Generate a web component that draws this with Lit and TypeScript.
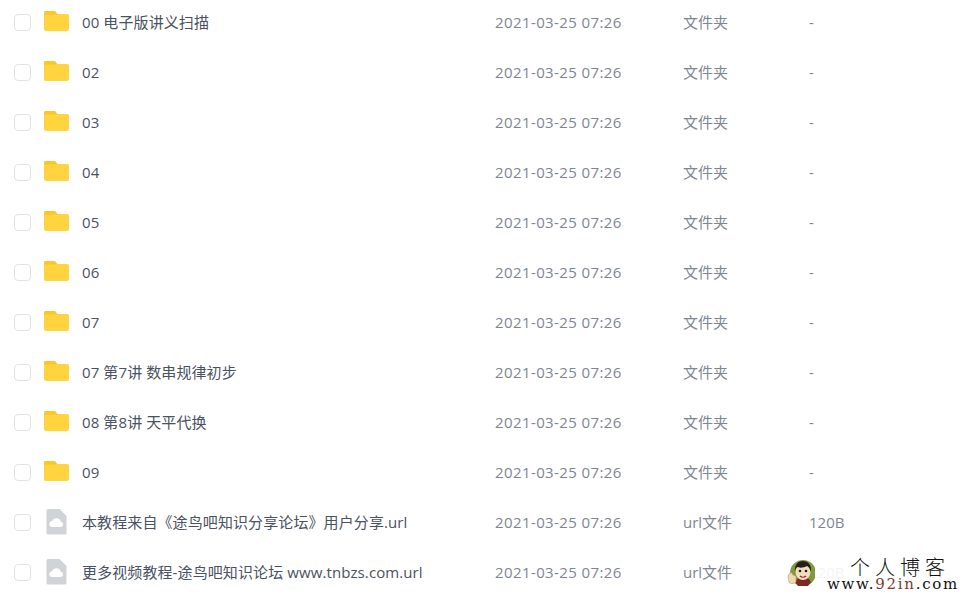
import { LitElement, html, css, svg } from "lit";
import { customElement } from "lit/decorators.js";

interface Row { name: string; kind: "folder" | "file"; type: string; size: string; }

const folder = (name: string): Row => ({ name, kind: "folder", type: "文件夹", size: "-" });
const rows: Row[] = [
  folder("00 电子版讲义扫描"), folder("02"), folder("03"), folder("04"), folder("05"),
  folder("06"), folder("07"), folder("07 第7讲 数串规律初步"), folder("08 第8讲 天平代换"), folder("09"),
  { name: "本教程来自《途鸟吧知识分享论坛》用户分享.url", kind: "file", type: "url文件", size: "120B" },
  { name: "更多视频教程-途鸟吧知识论坛 www.tnbzs.com.url", kind: "file", type: "url文件", size: "120B" },
];

const folderIcon = svg`<svg class="icon folder" width="25" height="20" viewBox="0 0 25 20">
  <path d="M0 2a2 2 0 0 1 2-2h8a2 2 0 0 1 1.500.7L13.500 3H23a2 2 0 0 1 2 2v13a2 2 0 0 1-2 2H2a2 2 0 0 1-2-2z" fill="#ffd43f"/>
  <path d="M0 2a2 2 0 0 1 2-2h8a2 2 0 0 1 1.500.7L13.500 3.400H0z" fill="#fcc62b"/>
</svg>`;

const fileIcon = svg`<svg class="icon" width="26" height="26" viewBox="0 0 26 26">
  <path d="M2.500 1.500A1.500 1.500 0 0 1 4 0h11.500l7 7v17a1.500 1.500 0 0 1-1.500 1.500H4A1.500 1.500 0 0 1 2.500 24z" fill="#d0d3d8"/>
  <path d="M7.500 18a3 3 0 0 1 .6-5.900 4.600 4.600 0 0 1 8.700.6A2.700 2.700 0 0 1 17 18z" fill="#fff"/>
</svg>`;

@customElement("app-root")
export class AppRoot extends LitElement {
  static styles = css`
    :host { display: block; position: relative; width: 978px; height: 594px; overflow: hidden; background: #fff;
      font-family: "Open Sans", "Noto Sans CJK SC", sans-serif; font-size: 15px; color: #555d6b; }
    .list { margin-top: -3px; }
    .row { display: flex; align-items: center; height: 50px; }
    .check { box-sizing: border-box; width: 17px; height: 17px; margin-left: 14px; border: 1.500px solid #e2e2e4; border-radius: 4px; flex: none; }
    .iconbox { width: 26px; margin-left: 13px; margin-right: 12px; display: flex; justify-content: flex-start; flex: none; }
    .icon { display: block; }
    .folder { margin-top: -2px; }
    .name, .date, .type, .size { line-height: 20px; padding-bottom: 1px; }
    .name { width: 413px; flex: none; white-space: nowrap; color: #4a5261; letter-spacing: 0.1px; }
    .date { width: 188px; flex: none; color: #7f8693; white-space: nowrap; letter-spacing: 0.4px; }
    .type { width: 126px; flex: none; color: #7f8693; white-space: nowrap; }
    .size { color: #7f8693; }
    .mark { position: absolute; left: 782px; top: 551px; width: 196px; height: 43px; background: rgba(255,255,255,.9);
      display: flex; align-items: center; }
    .avatar { display: block; flex: none; margin-left: 5px; margin-top: 0; }
    .brand { display: flex; flex-direction: column; align-items: center; color: #111; margin-left: 12px; margin-top: 1px; }
    .cn { font-family: "Noto Sans CJK SC", sans-serif; font-weight: 300; font-size: 20px; letter-spacing: 5px; line-height: 22px; margin-left: 14px; }
    .url { font-family: "DejaVu Serif", serif; font-size: 15px; line-height: 13px; letter-spacing: 1.700px; white-space: nowrap; }
    .url b { font-weight: 400; color: #7a3b30; }
  `;

  render() {
    return html`
      <div class="list">
        ${rows.map((r) => html`
          <div class="row">
            <span class="check"></span>
            <span class="iconbox">${r.kind === "folder" ? folderIcon : fileIcon}</span>
            <span class="name">${r.name}</span>
            <span class="date">2021-03-25 07:26</span>
            <span class="type">${r.type}</span>
            <span class="size">${r.size}</span>
          </div>`)}
      </div>
      <div class="mark">
        <svg class="avatar" width="28" height="30" viewBox="0 0 28 30">
          <circle cx="16" cy="15" r="13" fill="#7f9a3c"/>
          <path d="M8 24a9 9 0 0 1 16 0l-3 4h-10z" fill="#7a2a20"/>
          <ellipse cx="16" cy="14" rx="7.500" ry="8" fill="#f3dcc0"/>
          <path d="M8 14c-1-8 4-11 8-11s9 3 8 11c-1-3-2-5-4-6-3 2-8 2-10 1-1 1-2 3-2 5z" fill="#22201e"/>
          <circle cx="13" cy="13" r="1.300" fill="#222"/><circle cx="19" cy="13" r="1.300" fill="#222"/>
          <path d="M13 18q3 2.500 6 0" stroke="#922" stroke-width="1.200" fill="#fff"/>
          <path d="M1 19c0-3 3-5 4-4l1 2 3 1v6c-2 2-6 2-7 0z" fill="#f2d6ae" stroke="#b8946a" stroke-width=".6"/>
        </svg>
        <div class="brand">
          <span class="cn">个人博客</span>
          <span class="url">www.<b>92in</b>.com</span>
        </div>
      </div>
    `;
  }
}
